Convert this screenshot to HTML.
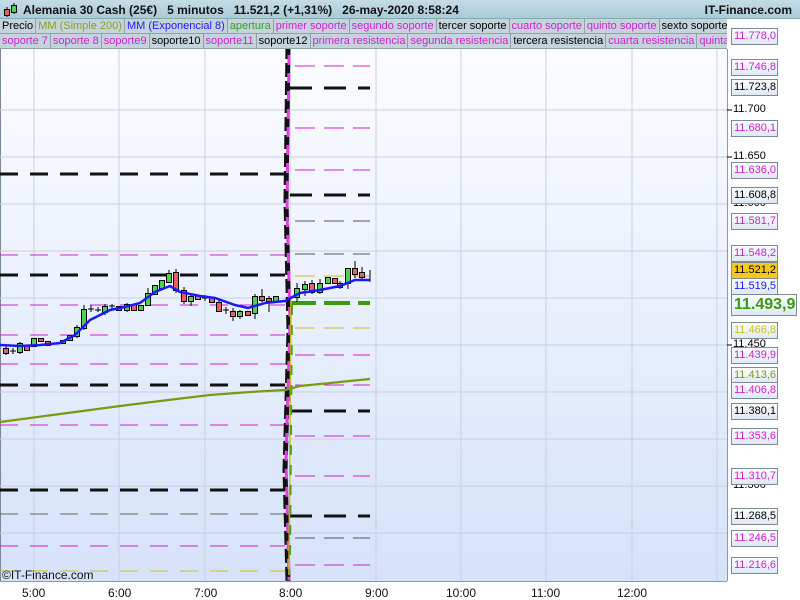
<!DOCTYPE html>
<html><head><meta charset="utf-8"><style>
*{margin:0;padding:0;box-sizing:border-box}
body{width:800px;height:600px;overflow:hidden;background:#fff;font-family:"Liberation Sans",sans-serif;position:relative}
.hdr{position:absolute;left:0;top:0;width:800px;height:19px;background:linear-gradient(#c4dce6,#a9cbd8);border-bottom:1px solid #8aa;font-size:12px;font-weight:bold;color:#111}
.row{position:absolute;left:0;height:15px;display:flex;font-size:11px;white-space:nowrap;overflow:hidden}
.row span{background:#c5d4dc;border:1px solid #8fa3ad;border-top:none;border-left:none;padding:0 2px 0 2px;line-height:14px}
.lab{position:absolute;left:731px;width:47px;height:17px;border:1px solid #7a8a96;background:linear-gradient(#fbfdff,#dfe8f4);font-size:11px;line-height:15px;padding-left:2px}
.tick{position:absolute;left:733px;font-size:11px;color:#000}
.tl{position:absolute;top:586px;font-size:12px;color:#111}
</style></head><body>
<div class="hdr">
<svg style="position:absolute;left:3px;top:2px" width="16" height="16"><line x1="4" y1="5" x2="4" y2="15" stroke="#000"/><rect x="1.5" y="7.5" width="5" height="6" fill="#e86060" stroke="#000"/><line x1="11" y1="1" x2="11" y2="12" stroke="#000"/><rect x="8.5" y="3.5" width="5" height="7" fill="#50d050" stroke="#000"/></svg>
<span style="position:absolute;left:23px;top:3px">Alemania 30 Cash (25€)&nbsp;&nbsp;&nbsp;5 minutos&nbsp;&nbsp;&nbsp;11.521,2 (+1,31%)&nbsp;&nbsp;&nbsp;26-may-2020 8:58:24</span>
<span style="position:absolute;right:8px;top:3px">IT-Finance.com</span>
</div>
<div class="row" style="top:19px;width:727px">
<span style="color:#000">Precio</span><span style="color:#8aa020">MM (Simple 200)</span><span style="color:#1a1aff">MM (Exponencial 8)</span><span style="color:#30a020">apertura</span><span style="color:#d020d0">primer soporte</span><span style="color:#d020d0">segundo soporte</span><span style="color:#000">tercer soporte</span><span style="color:#d020d0">cuarto soporte</span><span style="color:#d020d0">quinto soporte</span><span style="color:#000">sexto soporte</span>
</div>
<div class="row" style="top:34px;width:727px">
<span style="color:#d020d0">soporte 7</span><span style="color:#d020d0">soporte 8</span><span style="color:#d020d0">soporte9</span><span style="color:#000">soporte10</span><span style="color:#d020d0">soporte11</span><span style="color:#000">soporte12</span><span style="color:#d020d0">primera resistencia</span><span style="color:#d020d0">segunda resistencia</span><span style="color:#000">tercera resistencia</span><span style="color:#d020d0">cuarta resistencia</span><span style="color:#d020d0">quinta resistencia</span>
</div>
<svg style="position:absolute;left:0;top:49px" width="800" height="551">
<defs><linearGradient id="bg" x1="0" y1="0" x2="0" y2="1"><stop offset="0" stop-color="#fbfcff"/><stop offset="1" stop-color="#d6e2fa"/></linearGradient></defs>
<g transform="translate(0,-49)">
<rect x="0" y="49" width="727" height="532" fill="url(#bg)"/>
<rect x="0" y="49" width="1" height="532" fill="#789"/>
<g stroke="#c8d0e0" stroke-width="1">
<line x1="34" y1="49" x2="34" y2="581"/><line x1="119" y1="49" x2="119" y2="581"/><line x1="205" y1="49" x2="205" y2="581"/><line x1="290" y1="49" x2="290" y2="581"/><line x1="376" y1="49" x2="376" y2="581"/><line x1="461" y1="49" x2="461" y2="581"/><line x1="546" y1="49" x2="546" y2="581"/><line x1="632" y1="49" x2="632" y2="581"/><line x1="717" y1="49" x2="717" y2="581"/>
<line x1="0" y1="110" x2="727" y2="110"/><line x1="0" y1="157" x2="727" y2="157"/><line x1="0" y1="204" x2="727" y2="204"/><line x1="0" y1="251" x2="727" y2="251"/><line x1="0" y1="298" x2="727" y2="298"/><line x1="0" y1="345" x2="727" y2="345"/><line x1="0" y1="392" x2="727" y2="392"/><line x1="0" y1="439" x2="727" y2="439"/><line x1="0" y1="486" x2="727" y2="486"/><line x1="0" y1="533" x2="727" y2="533"/>
</g>
<g fill="none">
<g stroke="#111" stroke-width="3" stroke-dasharray="18,12"><line x1="0" y1="174" x2="285" y2="174"/><line x1="0" y1="275" x2="285" y2="275"/><line x1="0" y1="385" x2="285" y2="385"/><line x1="0" y1="490" x2="285" y2="490"/></g>
<g stroke="#d020d0" stroke-width="1" stroke-dasharray="18,12"><line x1="0" y1="255" x2="285" y2="255"/><line x1="0" y1="305" x2="285" y2="305"/><line x1="0" y1="335" x2="285" y2="335"/><line x1="0" y1="364" x2="285" y2="364"/><line x1="0" y1="425" x2="285" y2="425"/><line x1="0" y1="546" x2="285" y2="546"/></g>
<g stroke="#666" stroke-width="1" stroke-dasharray="18,12"><line x1="0" y1="514" x2="285" y2="514"/></g>
<g stroke="#c8c020" stroke-width="1" stroke-dasharray="18,12"><line x1="0" y1="571" x2="285" y2="571"/></g>
</g>
<g fill="none">
<g stroke="#111" stroke-width="3" stroke-dasharray="22,12"><line x1="290" y1="88" x2="370" y2="88"/><line x1="290" y1="195" x2="370" y2="195"/><line x1="290" y1="411" x2="370" y2="411"/><line x1="290" y1="516" x2="370" y2="516"/></g>
<g stroke="#d020d0" stroke-width="1" stroke-dasharray="20,9"><line x1="295" y1="66" x2="370" y2="66"/><line x1="295" y1="128" x2="370" y2="128"/><line x1="295" y1="170" x2="370" y2="170"/><line x1="295" y1="355" x2="370" y2="355"/><line x1="295" y1="385" x2="370" y2="385"/><line x1="295" y1="436" x2="370" y2="436"/><line x1="295" y1="476" x2="370" y2="476"/><line x1="295" y1="565" x2="370" y2="565"/></g>
<g stroke="#555" stroke-width="1" stroke-dasharray="20,9"><line x1="295" y1="221" x2="370" y2="221"/><line x1="295" y1="254" x2="370" y2="254"/><line x1="295" y1="538" x2="370" y2="538"/></g>
<g stroke="#c8c020" stroke-width="1" stroke-dasharray="20,9"><line x1="295" y1="276" x2="370" y2="276"/><line x1="295" y1="328" x2="370" y2="328"/></g>
<line x1="290" y1="303" x2="370" y2="303" stroke="#3a9a10" stroke-width="4" stroke-dasharray="26,8"/>
</g>
<path d="M288 45 L286 200 L289 330 L285 470 L288 581" stroke="#111" stroke-width="5" fill="none" stroke-dasharray="14,4"/>
<path d="M289 55 L287 210 L290 320 L286 460 L289 580" stroke="#e040e0" stroke-width="3" fill="none" stroke-dasharray="10,8"/>
<line x1="291" y1="300" x2="289" y2="575" stroke="#c8c020" stroke-width="1.5"/>
<line x1="292" y1="305" x2="290" y2="560" stroke="#50a010" stroke-width="2" stroke-dasharray="10,10"/>
<polyline points="0,422 60,414 120,406 160,401 210,395 250,392 285,390 300,386 340,382 370,379" stroke="#7a9a10" stroke-width="2.2" fill="none"/>
<g stroke="#000" stroke-width="1">
<line x1="6" y1="346" x2="6" y2="355"/><rect x="3.5" y="348.5" width="5" height="5" fill="#e86060"/>
<line x1="13" y1="348" x2="13" y2="354"/><line x1="10" y1="351" x2="16" y2="351"/>
<line x1="20" y1="342" x2="20" y2="354"/><rect x="17.5" y="343.5" width="5" height="9" fill="#50d050"/>
<rect x="24.5" y="345.5" width="5" height="5" fill="#e86060"/>
<rect x="31.5" y="338.5" width="5" height="8" fill="#50d050"/>
<rect x="38.5" y="338.5" width="5" height="3" fill="#e86060"/>
<rect x="45.5" y="341.5" width="5" height="4" fill="#e86060"/>
<rect x="60.5" y="340.5" width="5" height="3" fill="#50d050"/>
<rect x="67.5" y="335.5" width="5" height="5" fill="#50d050"/>
<line x1="77" y1="325" x2="77" y2="338"/><rect x="74.5" y="327.5" width="5" height="9" fill="#50d050"/>
<line x1="84" y1="305" x2="84" y2="330"/><rect x="81.5" y="309.5" width="5" height="19" fill="#50d050"/>
<line x1="91" y1="305" x2="91" y2="312"/><line x1="88" y1="309" x2="94" y2="309"/>
<line x1="98" y1="307" x2="98" y2="312"/><line x1="95" y1="310" x2="101" y2="310"/>
<line x1="105" y1="304" x2="105" y2="315"/><rect x="102.5" y="306.5" width="5" height="6" fill="#50d050"/>
<line x1="112" y1="304" x2="112" y2="309"/><line x1="109" y1="306" x2="115" y2="306"/>
<rect x="116.5" y="306.5" width="5" height="4" fill="#e86060"/>
<line x1="127" y1="303" x2="127" y2="312"/><rect x="124.5" y="304.5" width="5" height="6" fill="#50d050"/>
<rect x="131.5" y="304.5" width="5" height="6" fill="#e86060"/>
<rect x="138.5" y="305.5" width="5" height="5" fill="#50d050"/>
<line x1="148" y1="288" x2="148" y2="306"/><rect x="145.5" y="293.5" width="5" height="12" fill="#50d050"/>
<rect x="152.5" y="285.5" width="5" height="9" fill="#50d050"/>
<rect x="159.5" y="280.5" width="5" height="8" fill="#50d050"/>
<line x1="169" y1="270" x2="169" y2="283"/><rect x="166.5" y="273.5" width="5" height="9" fill="#50d050"/>
<line x1="176" y1="269" x2="176" y2="293"/><rect x="173.5" y="272.5" width="5" height="18" fill="#e86060"/>
<line x1="184" y1="287" x2="184" y2="304"/><rect x="181.5" y="290.5" width="5" height="11" fill="#e86060"/>
<line x1="191" y1="293" x2="191" y2="306"/><rect x="188.5" y="296.5" width="5" height="5" fill="#50d050"/>
<rect x="195.5" y="295.5" width="5" height="4" fill="#e86060"/>
<line x1="205" y1="295" x2="205" y2="301"/><line x1="202" y1="298" x2="208" y2="298"/>
<rect x="209.5" y="297.5" width="5" height="5" fill="#e86060"/>
<line x1="219" y1="298" x2="219" y2="312"/><rect x="216.5" y="302.5" width="5" height="9" fill="#e86060"/>
<line x1="226" y1="307" x2="226" y2="314"/><line x1="223" y1="310" x2="229" y2="310"/>
<line x1="233" y1="308" x2="233" y2="321"/><rect x="230.5" y="311.5" width="5" height="5" fill="#e86060"/>
<line x1="240" y1="310" x2="240" y2="319"/><rect x="237.5" y="311.5" width="5" height="5" fill="#50d050"/>
<rect x="245.5" y="311.5" width="5" height="4" fill="#e86060"/>
<line x1="255" y1="294" x2="255" y2="319"/><rect x="252.5" y="296.5" width="5" height="17" fill="#50d050"/>
<line x1="262" y1="289" x2="262" y2="302"/><rect x="259.5" y="296.5" width="5" height="4" fill="#e86060"/>
<line x1="269" y1="296" x2="269" y2="312"/><rect x="266.5" y="298.5" width="5" height="3" fill="#e86060"/>
<rect x="273.5" y="296.5" width="5" height="5" fill="#50d050"/>
<line x1="297" y1="283" x2="297" y2="302"/><rect x="294.5" y="288.5" width="5" height="9" fill="#50d050"/>
<line x1="305" y1="281" x2="305" y2="296"/><rect x="302.5" y="284.5" width="5" height="5" fill="#50d050"/>
<line x1="312" y1="280" x2="312" y2="294"/><rect x="309.5" y="283.5" width="5" height="9" fill="#e86060"/>
<line x1="320" y1="279" x2="320" y2="294"/><rect x="317.5" y="283.5" width="5" height="9" fill="#50d050"/>
<rect x="325.5" y="277.5" width="5" height="6" fill="#50d050"/>
<rect x="332.5" y="278.5" width="5" height="5" fill="#e86060"/>
<line x1="340" y1="281" x2="340" y2="289"/><rect x="337.5" y="283.5" width="5" height="4" fill="#e86060"/>
<line x1="348" y1="268" x2="348" y2="289"/><rect x="345.5" y="268.5" width="5" height="15" fill="#50d050"/>
<line x1="355" y1="261" x2="355" y2="278"/><rect x="352.5" y="268.5" width="5" height="6" fill="#e86060"/>
<line x1="362" y1="267" x2="362" y2="280"/><rect x="359.5" y="272.5" width="5" height="5" fill="#e86060"/>
<line x1="370" y1="270" x2="370" y2="282"/>
</g>
<polyline points="0,345 20,346 40,345 60,343 75,335 90,320 110,310 125,307 140,303 155,292 170,286 180,292 200,296 215,298 235,305 248,308 265,303 285,301 300,293 320,290 340,286 355,280 370,280" stroke="#1a1aff" stroke-width="2.5" fill="none"/>
<rect x="727" y="49" width="73" height="551" fill="#fff"/>
<line x1="727.5" y1="0" x2="727.5" y2="581" stroke="#8a9aa6"/>
<line x1="0" y1="581.5" x2="727" y2="581.5" stroke="#8a9aa6"/>
<g stroke="#000">
<line x1="727" y1="110" x2="732" y2="110"/><line x1="727" y1="157" x2="732" y2="157"/><line x1="727" y1="345" x2="732" y2="345"/>
</g>
</g>
</svg>
<div class="tick" style="top:103px">11.700</div>
<div class="tick" style="top:150px">11.650</div>
<div class="tick" style="top:197px">11.600</div>
<div class="tick" style="top:338px">11.450</div>
<div class="tick" style="top:479px">11.300</div>
<div class="lab" style="top:28px;color:#d020d0">11.778,0</div>
<div class="lab" style="top:59px;color:#d020d0">11.746,8</div>
<div class="lab" style="top:79px;color:#000">11.723,8</div>
<div class="lab" style="top:120px;color:#d020d0">11.680,1</div>
<div class="lab" style="top:162px;color:#d020d0">11.636,0</div>
<div class="lab" style="top:187px;color:#000">11.608,8</div>
<div class="lab" style="top:213px;color:#d020d0">11.581,7</div>
<div class="lab" style="top:245px;color:#d020d0">11.548,2</div>
<div class="lab" style="top:262px;color:#000;background:#f8c818">11.521,2</div>
<div class="lab" style="top:278px;color:#1a1aff">11.519,5</div>
<div class="lab" style="top:294px;left:731px;width:66px;height:22px;color:#3a9a10;font-size:16px;font-weight:bold;line-height:20px">11.493,9</div>
<div class="lab" style="top:322px;color:#c8c020">11.466,8</div>
<div class="lab" style="top:347px;color:#d020d0">11.439,9</div>
<div class="lab" style="top:367px;color:#7a9a10">11.413,6</div>
<div class="lab" style="top:382px;color:#d020d0">11.406,8</div>
<div class="lab" style="top:403px;color:#000">11.380,1</div>
<div class="lab" style="top:428px;color:#d020d0">11.353,6</div>
<div class="lab" style="top:468px;color:#d020d0">11.310,7</div>
<div class="lab" style="top:508px;color:#000">11.268,5</div>
<div class="lab" style="top:530px;color:#d020d0">11.246,5</div>
<div class="lab" style="top:557px;color:#d020d0">11.216,6</div>
<div style="position:absolute;left:2px;top:568px;font-size:12px;color:#111">©IT-Finance.com</div>
<div class="tl" style="left:22px">5:00</div><div class="tl" style="left:108px">6:00</div><div class="tl" style="left:194px">7:00</div><div class="tl" style="left:279px">8:00</div><div class="tl" style="left:365px">9:00</div><div class="tl" style="left:446px">10:00</div><div class="tl" style="left:531px">11:00</div><div class="tl" style="left:617px">12:00</div>
</body></html>
